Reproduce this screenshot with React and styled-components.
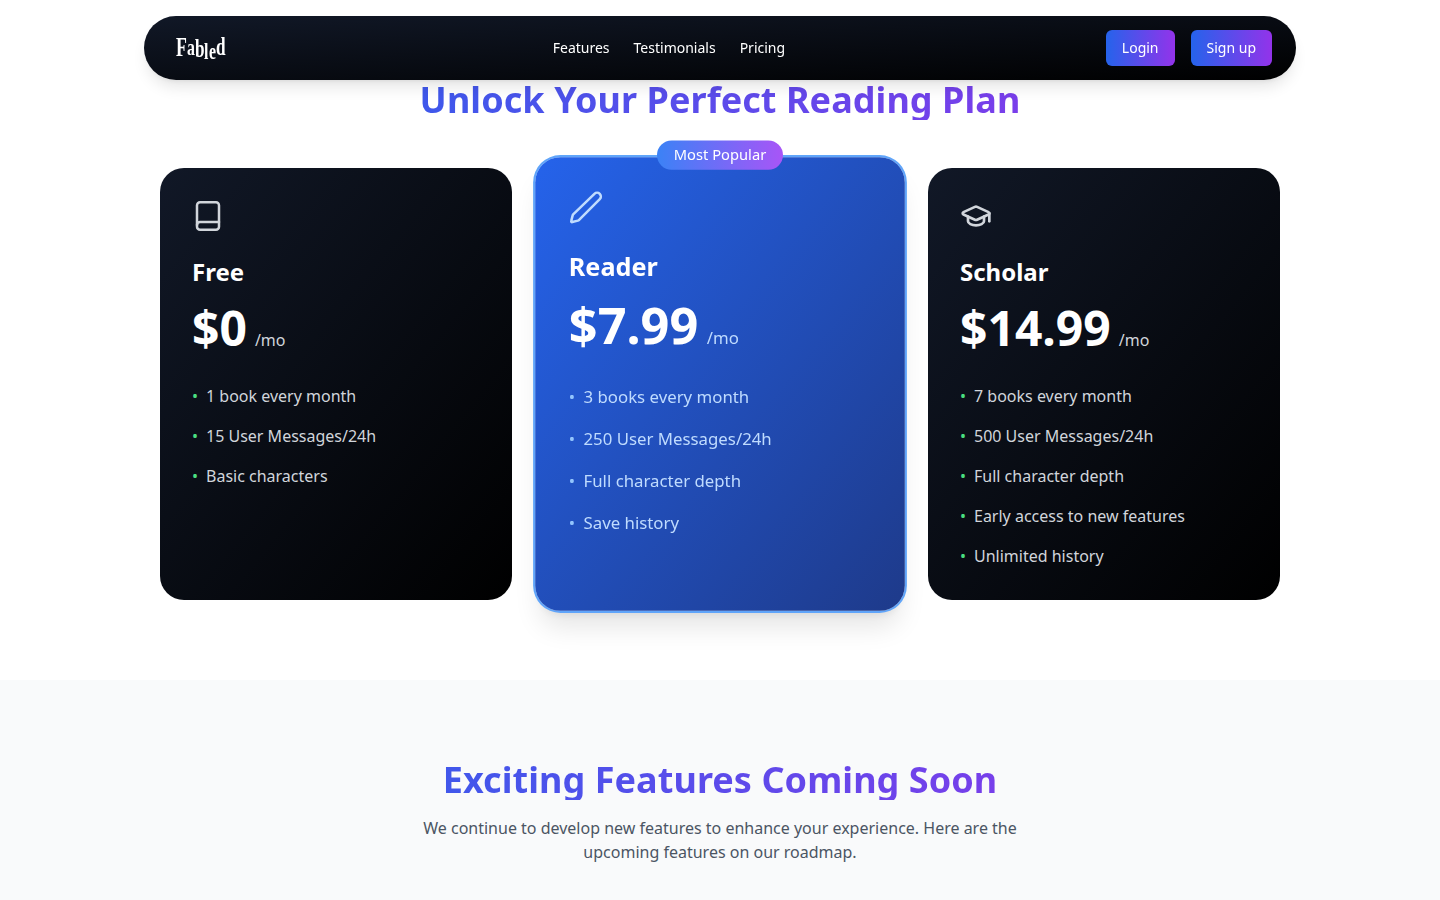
import React from "react";
import styled, { createGlobalStyle } from "styled-components";
import { GraduationCap } from "lucide-react";

const plans = [
  {
    name: "Free",
    price: "$0",
    icon: "book",
    features: ["1 book every month", "15 User Messages/24h", "Basic characters"],
  },
  {
    name: "Reader",
    price: "$7.99",
    icon: "pencil",
    popular: true,
    features: ["3 books every month", "250 User Messages/24h", "Full character depth", "Save history"],
  },
  {
    name: "Scholar",
    price: "$14.99",
    icon: "cap",
    features: [
      "7 books every month",
      "500 User Messages/24h",
      "Full character depth",
      "Early access to new features",
      "Unlimited history",
    ],
  },
];

const logoLetters = [
  { char: "F", size: 27, width: 10.8, drop: 0 },
  { char: "a", size: 24, width: 7.9, drop: 0 },
  { char: "b", size: 26, width: 9.4, drop: 2 },
  { char: "l", size: 24, width: 4.7, drop: 4 },
  { char: "e", size: 24, width: 7.3, drop: 4 },
  { char: "d", size: 26, width: 9.5, drop: 0 },
];

const BookIcon = () => (
  <svg width="32" height="32" viewBox="0 0 32 32" fill="none" stroke="currentColor" strokeWidth="2.5" strokeLinecap="round" strokeLinejoin="round">
    <rect x="5" y="2.2" width="22" height="27.6" rx="3" />
    <path d="M5 25a3 3 0 0 1 3-3h19" />
  </svg>
);

const PencilIcon = () => (
  <svg width="32" height="32" viewBox="0 0 32 32" fill="none" stroke="currentColor" strokeWidth="2.4" strokeLinecap="round" strokeLinejoin="round">
    <path d="M24.4 2.9a3.6 3.6 0 0 1 5.1 5.1L9.6 27.9a2 2 0 0 1-.9.5l-5.4 1.4a.8.8 0 0 1-1-1l1.4-5.4a2 2 0 0 1 .5-.9z" />
  </svg>
);

const PlanIcon = ({ type }) => {
  if (type === "book") return <BookIcon />;
  if (type === "pencil") return <PencilIcon />;
  return <GraduationCap size={32} strokeWidth={2} />;
};

const App = () => (
  <>
    <GlobalStyle />
    <NavBar>
      <Logo aria-label="Fabled">
        {logoLetters.map((l, i) => (
          <LogoLetter key={i} $size={l.size} $width={l.width} $drop={l.drop}>
            {l.char}
          </LogoLetter>
        ))}
      </Logo>
      <NavLinks>
        <NavLink href="#features">Features</NavLink>
        <NavLink href="#testimonials">Testimonials</NavLink>
        <NavLink href="#pricing">Pricing</NavLink>
      </NavLinks>
      <NavActions>
        <NavButton>Login</NavButton>
        <NavButton>Sign up</NavButton>
      </NavActions>
    </NavBar>

    <PricingSection>
      <GradientHeading>Unlock Your Perfect Reading Plan</GradientHeading>
      <PlanGrid>
        {plans.map((plan) => (
          <PlanCard key={plan.name} $popular={plan.popular}>
            {plan.popular && <PopularBadge>Most Popular</PopularBadge>}
            <IconSlot $popular={plan.popular}>
              <PlanIcon type={plan.icon} />
            </IconSlot>
            <PlanName>{plan.name}</PlanName>
            <PriceRow>
              <Price>{plan.price}</Price>
              <PriceUnit $popular={plan.popular}>/mo</PriceUnit>
            </PriceRow>
            <FeatureList>
              {plan.features.map((f) => (
                <FeatureItem key={f} $popular={plan.popular}>
                  <Bullet $popular={plan.popular}>•</Bullet>
                  {f}
                </FeatureItem>
              ))}
            </FeatureList>
          </PlanCard>
        ))}
      </PlanGrid>
    </PricingSection>

    <RoadmapSection>
      <GradientHeading>Exciting Features Coming Soon</GradientHeading>
      <RoadmapText>
        We continue to develop new features to enhance your experience. Here are the upcoming features on our roadmap.
      </RoadmapText>
    </RoadmapSection>
  </>
);

const GlobalStyle = createGlobalStyle`
  html, body {
    margin: 0;
    padding: 0;
    background: #fff;
    font-family: "Noto Sans", sans-serif;
    overflow: hidden;
  }
  * {
    box-sizing: border-box;
  }
`;

const NavBar = styled.nav`
  position: fixed;
  top: 16px;
  left: 144px;
  width: 1152px;
  height: 64px;
  padding: 0 24px 0 32px;
  display: flex;
  align-items: center;
  justify-content: space-between;
  border-radius: 32px;
  background: linear-gradient(to bottom right, #111827, #000);
  box-shadow: 0 10px 15px -3px rgba(0, 0, 0, 0.1), 0 4px 6px -4px rgba(0, 0, 0, 0.1);
  z-index: 10;
`;

const Logo = styled.div`
  width: 56px;
  height: 32px;
  display: flex;
  align-items: flex-start;
  color: #fff;
  font-family: "Liberation Serif", serif;
  font-weight: 700;
  line-height: 32px;
`;

const LogoLetter = styled.span`
  display: inline-block;
  flex: none;
  font-size: ${(p) => p.$size}px;
  width: ${(p) => p.$width}px;
  transform: translateY(${(p) => p.$drop - 1}px) scaleX(0.66);
  transform-origin: left top;
`;

const NavLinks = styled.div`
  display: flex;
  gap: 24px;
`;

const NavLink = styled.a`
  color: #fff;
  font-size: 14px;
  line-height: 20px;
  text-decoration: none;
`;

const NavActions = styled.div`
  display: flex;
  gap: 16px;
`;

const NavButton = styled.button`
  display: block;
  padding: 8px 16px;
  border: 0;
  border-radius: 6px;
  background: linear-gradient(to right, #2563eb, #9333ea);
  color: #fff;
  font-family: inherit;
  font-size: 14px;
  line-height: 20px;
`;

const PricingSection = styled.section`
  padding: 80px 0;
`;

const GradientHeading = styled.h2`
  width: 1120px;
  margin: 0 auto;
  font-size: 36px;
  line-height: 40px;
  font-weight: 700;
  letter-spacing: 0.06px;
  text-align: center;
  background: linear-gradient(to right, #2563eb, #9333ea);
  -webkit-background-clip: text;
  background-clip: text;
  color: transparent;
`;

const PlanGrid = styled.div`
  width: 1120px;
  margin: 48px auto 0;
  display: grid;
  grid-template-columns: repeat(3, 352px);
  gap: 32px;
`;

const PlanCard = styled.div`
  position: relative;
  padding: 32px;
  border-radius: 24px;
  color: #fff;
  background: ${(p) =>
    p.$popular
      ? "linear-gradient(to bottom right, #2563eb, #1e3a8a)"
      : "linear-gradient(to bottom right, #111827, #000)"};
  ${(p) =>
    p.$popular &&
    `
    transform: scale(1.05);
    box-shadow: 0 0 0 2px #60a5fa, 0 20px 25px -5px rgba(0, 0, 0, 0.1), 0 8px 10px -6px rgba(0, 0, 0, 0.1);
  `}
`;

const PopularBadge = styled.span`
  position: absolute;
  top: -16px;
  left: 50%;
  transform: translateX(-50%);
  padding: 4px 16px;
  border-radius: 14px;
  background: linear-gradient(to right, #3b82f6, #a855f7);
  color: #fff;
  font-size: 14px;
  line-height: 20px;
  white-space: nowrap;
`;

const IconSlot = styled.div`
  display: flex;
  height: 32px;
  margin-bottom: 24px;
  color: ${(p) => (p.$popular ? "#bfdbfe" : "#d1d5db")};
`;

const PlanName = styled.h3`
  margin: 0 0 16px;
  font-size: 24px;
  line-height: 32px;
  font-weight: 700;
`;

const PriceRow = styled.div`
  display: flex;
  align-items: baseline;
  gap: 8px;
`;

const Price = styled.span`
  font-size: 48px;
  line-height: 48px;
  font-weight: 700;
`;

const PriceUnit = styled.span`
  font-size: 16px;
  color: ${(p) => (p.$popular ? "#bfdbfe" : "#d1d5db")};
`;

const FeatureList = styled.ul`
  list-style: none;
  margin: 32px 0 0;
  padding: 0;
  display: flex;
  flex-direction: column;
  gap: 16px;
`;

const FeatureItem = styled.li`
  font-size: 16px;
  line-height: 24px;
  color: ${(p) => (p.$popular ? "#bfdbfe" : "#d1d5db")};
`;

const Bullet = styled.span`
  display: inline-block;
  width: 14px;
  color: ${(p) => (p.$popular ? "#93c5fd" : "#4ade80")};
`;

const RoadmapSection = styled.section`
  padding: 80px 0 36px;
  background: #f9fafb;
`;

const RoadmapText = styled.p`
  width: 620px;
  margin: 16px auto 0;
  font-size: 16px;
  line-height: 24px;
  text-align: center;
  color: #4b5563;
`;

export default App;
